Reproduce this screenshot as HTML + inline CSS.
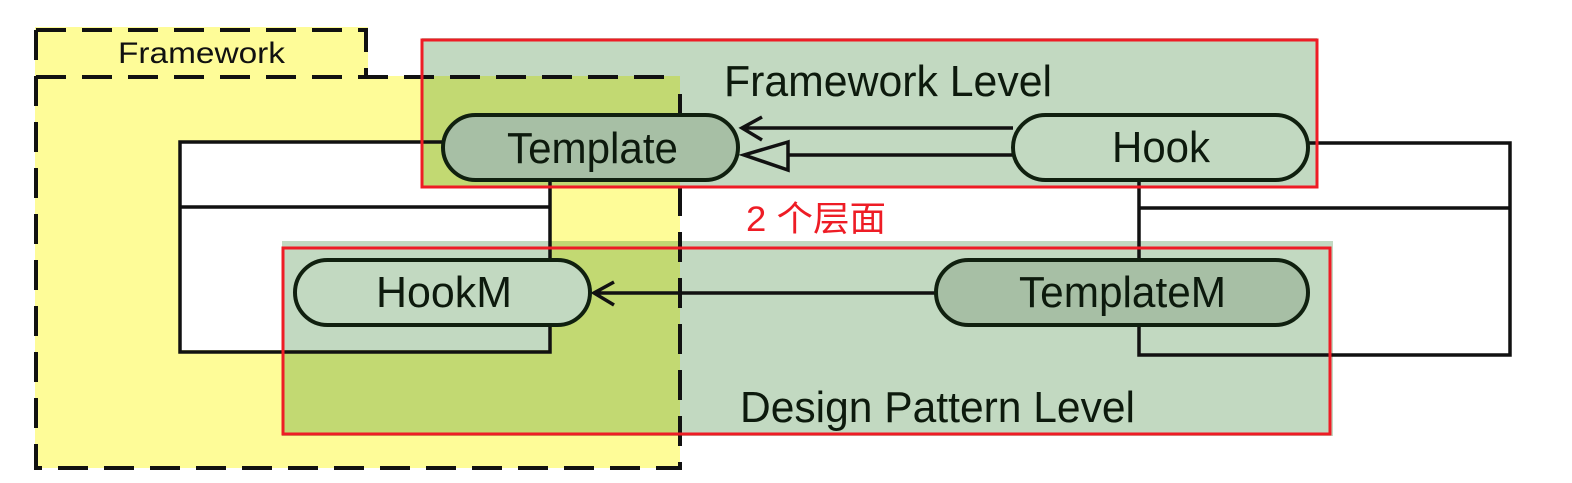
<!DOCTYPE html>
<html><head><meta charset="utf-8"><style>html,body{margin:0;padding:0;background:#fff;width:1572px;height:483px;overflow:hidden}svg{display:block}</style></head>
<body>
<svg width="1572" height="483" viewBox="0 0 1572 483" xmlns="http://www.w3.org/2000/svg" font-family="Liberation Sans, Arial, sans-serif">
<rect x="35" y="27" width="333" height="51" fill="#fefc98"/>
<rect x="35" y="76" width="645" height="392" fill="#fefc98"/>
<rect x="422" y="38" width="895" height="150" fill="#c2d9c1"/>
<rect x="282" y="241" width="1051" height="195" fill="#c2d9c1"/>
<rect x="422" y="76" width="258" height="112" fill="#c2d972"/>
<rect x="282" y="241" width="398" height="195" fill="#c2d972"/>
<rect x="181" y="143" width="241" height="207" fill="#fff"/>
<rect x="422" y="188" width="128" height="53" fill="#fff"/>
<rect x="282" y="241" width="268" height="109" fill="#c2d9c1"/>
<!-- dashed borders -->
<g stroke="#111" stroke-width="4" fill="none" stroke-dasharray="30 16">
<path d="M36 30 H366 V77"/>
<path d="M36 30 V468 H680 V80"/>
<path d="M36 77 H680"/>
</g>
<g stroke="#111" stroke-width="3.5" fill="none">
<path d="M443 142 H180 V352 H550 V325"/>
<path d="M180 207 H550"/>
<path d="M550 180 V260"/>
<path d="M1308 143 H1510 V355 H1139 V325"/>
<path d="M1139 208 H1510"/>
<path d="M1139 180 V260"/>
<path d="M1013 128 H742 M762 117 L742 128 L762 140"/>
<path d="M1013 155 H788 M788 142 L744 155 L788 170 Z"/>
<path d="M936 293 H594 M614 282 L594 293 L614 305"/>
</g>
<g stroke="#10200f" stroke-width="4">
<rect x="443" y="115" width="295" height="65" rx="32.5" fill="#a7bfa5"/>
<rect x="1013" y="115" width="295" height="65" rx="32.5" fill="#c2d9c1"/>
<rect x="295" y="260" width="295" height="65" rx="32.5" fill="#c2d9c1"/>
<rect x="936" y="260" width="372" height="65" rx="32.5" fill="#a7bfa5"/>
</g>
<g stroke="#ee1c25" stroke-width="3" fill="none">
<rect x="422" y="40" width="895" height="147"/>
<rect x="283" y="248" width="1047" height="186"/>
</g>
<g fill="#0d1a0d" font-size="44">
<text x="507" y="163" textLength="171" lengthAdjust="spacingAndGlyphs">Template</text>
<text x="1112" y="162" textLength="98" lengthAdjust="spacingAndGlyphs">Hook</text>
<text x="376" y="307" textLength="136" lengthAdjust="spacingAndGlyphs">HookM</text>
<text x="1019" y="307" textLength="207" lengthAdjust="spacingAndGlyphs">TemplateM</text>
<text x="724" y="96" textLength="328" lengthAdjust="spacingAndGlyphs">Framework Level</text>
<text x="740" y="422" textLength="395" lengthAdjust="spacingAndGlyphs">Design Pattern Level</text>
</g>
<text x="118" y="63" font-size="30" fill="#111" textLength="167" lengthAdjust="spacingAndGlyphs">Framework</text>
<text x="746" y="231" font-size="35" fill="#ee1c25" font-family="Liberation Sans, Noto Sans CJK SC, sans-serif" textLength="140" lengthAdjust="spacingAndGlyphs">2 个层面</text>
</svg>
</body></html>
